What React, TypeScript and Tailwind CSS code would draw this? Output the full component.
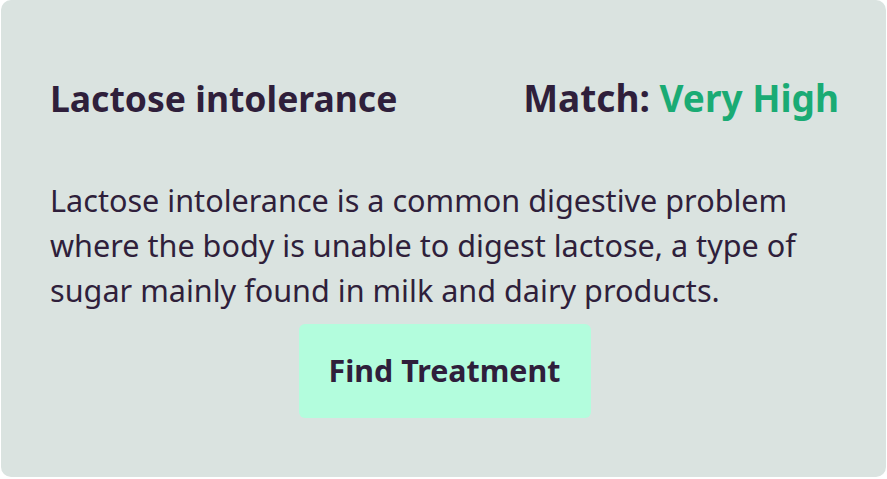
import React from "react";

export default function App() {
  return (
    <div className="w-[887px] h-[479px] bg-white" style={{ fontFamily: '"Noto Sans", "Open Sans", sans-serif' }}>
      <div className="ml-px w-[885px] h-[477px] rounded-[10px] bg-[#dae3e0] flex flex-col pl-[49px] pr-[47px] pt-[71px] text-[#2f1f3b]">
        <div className="flex items-center justify-between h-[54px]">
          <h2 className="text-[35.5px] font-bold leading-[54px]">Lactose intolerance</h2>
          <div className="text-[37px] font-bold leading-[54px]">
            Match: <span className="text-[#1aab74]">Very High</span>
          </div>
        </div>
        <p className="mt-[53px] text-[30.6px] leading-[45px] whitespace-nowrap">
          Lactose intolerance is a common digestive problem
          <br />
          where the body is unable to digest lactose, a type of
          <br />
          sugar mainly found in milk and dairy products.
        </p>
        <div className="flex justify-center mt-[11px]">
          <button className="w-[292px] h-[94px] rounded-[6px] bg-[#b3fddd] text-[30.4px] font-bold text-[#2f1f3b]">
            Find Treatment
          </button>
        </div>
      </div>
    </div>
  );
}
